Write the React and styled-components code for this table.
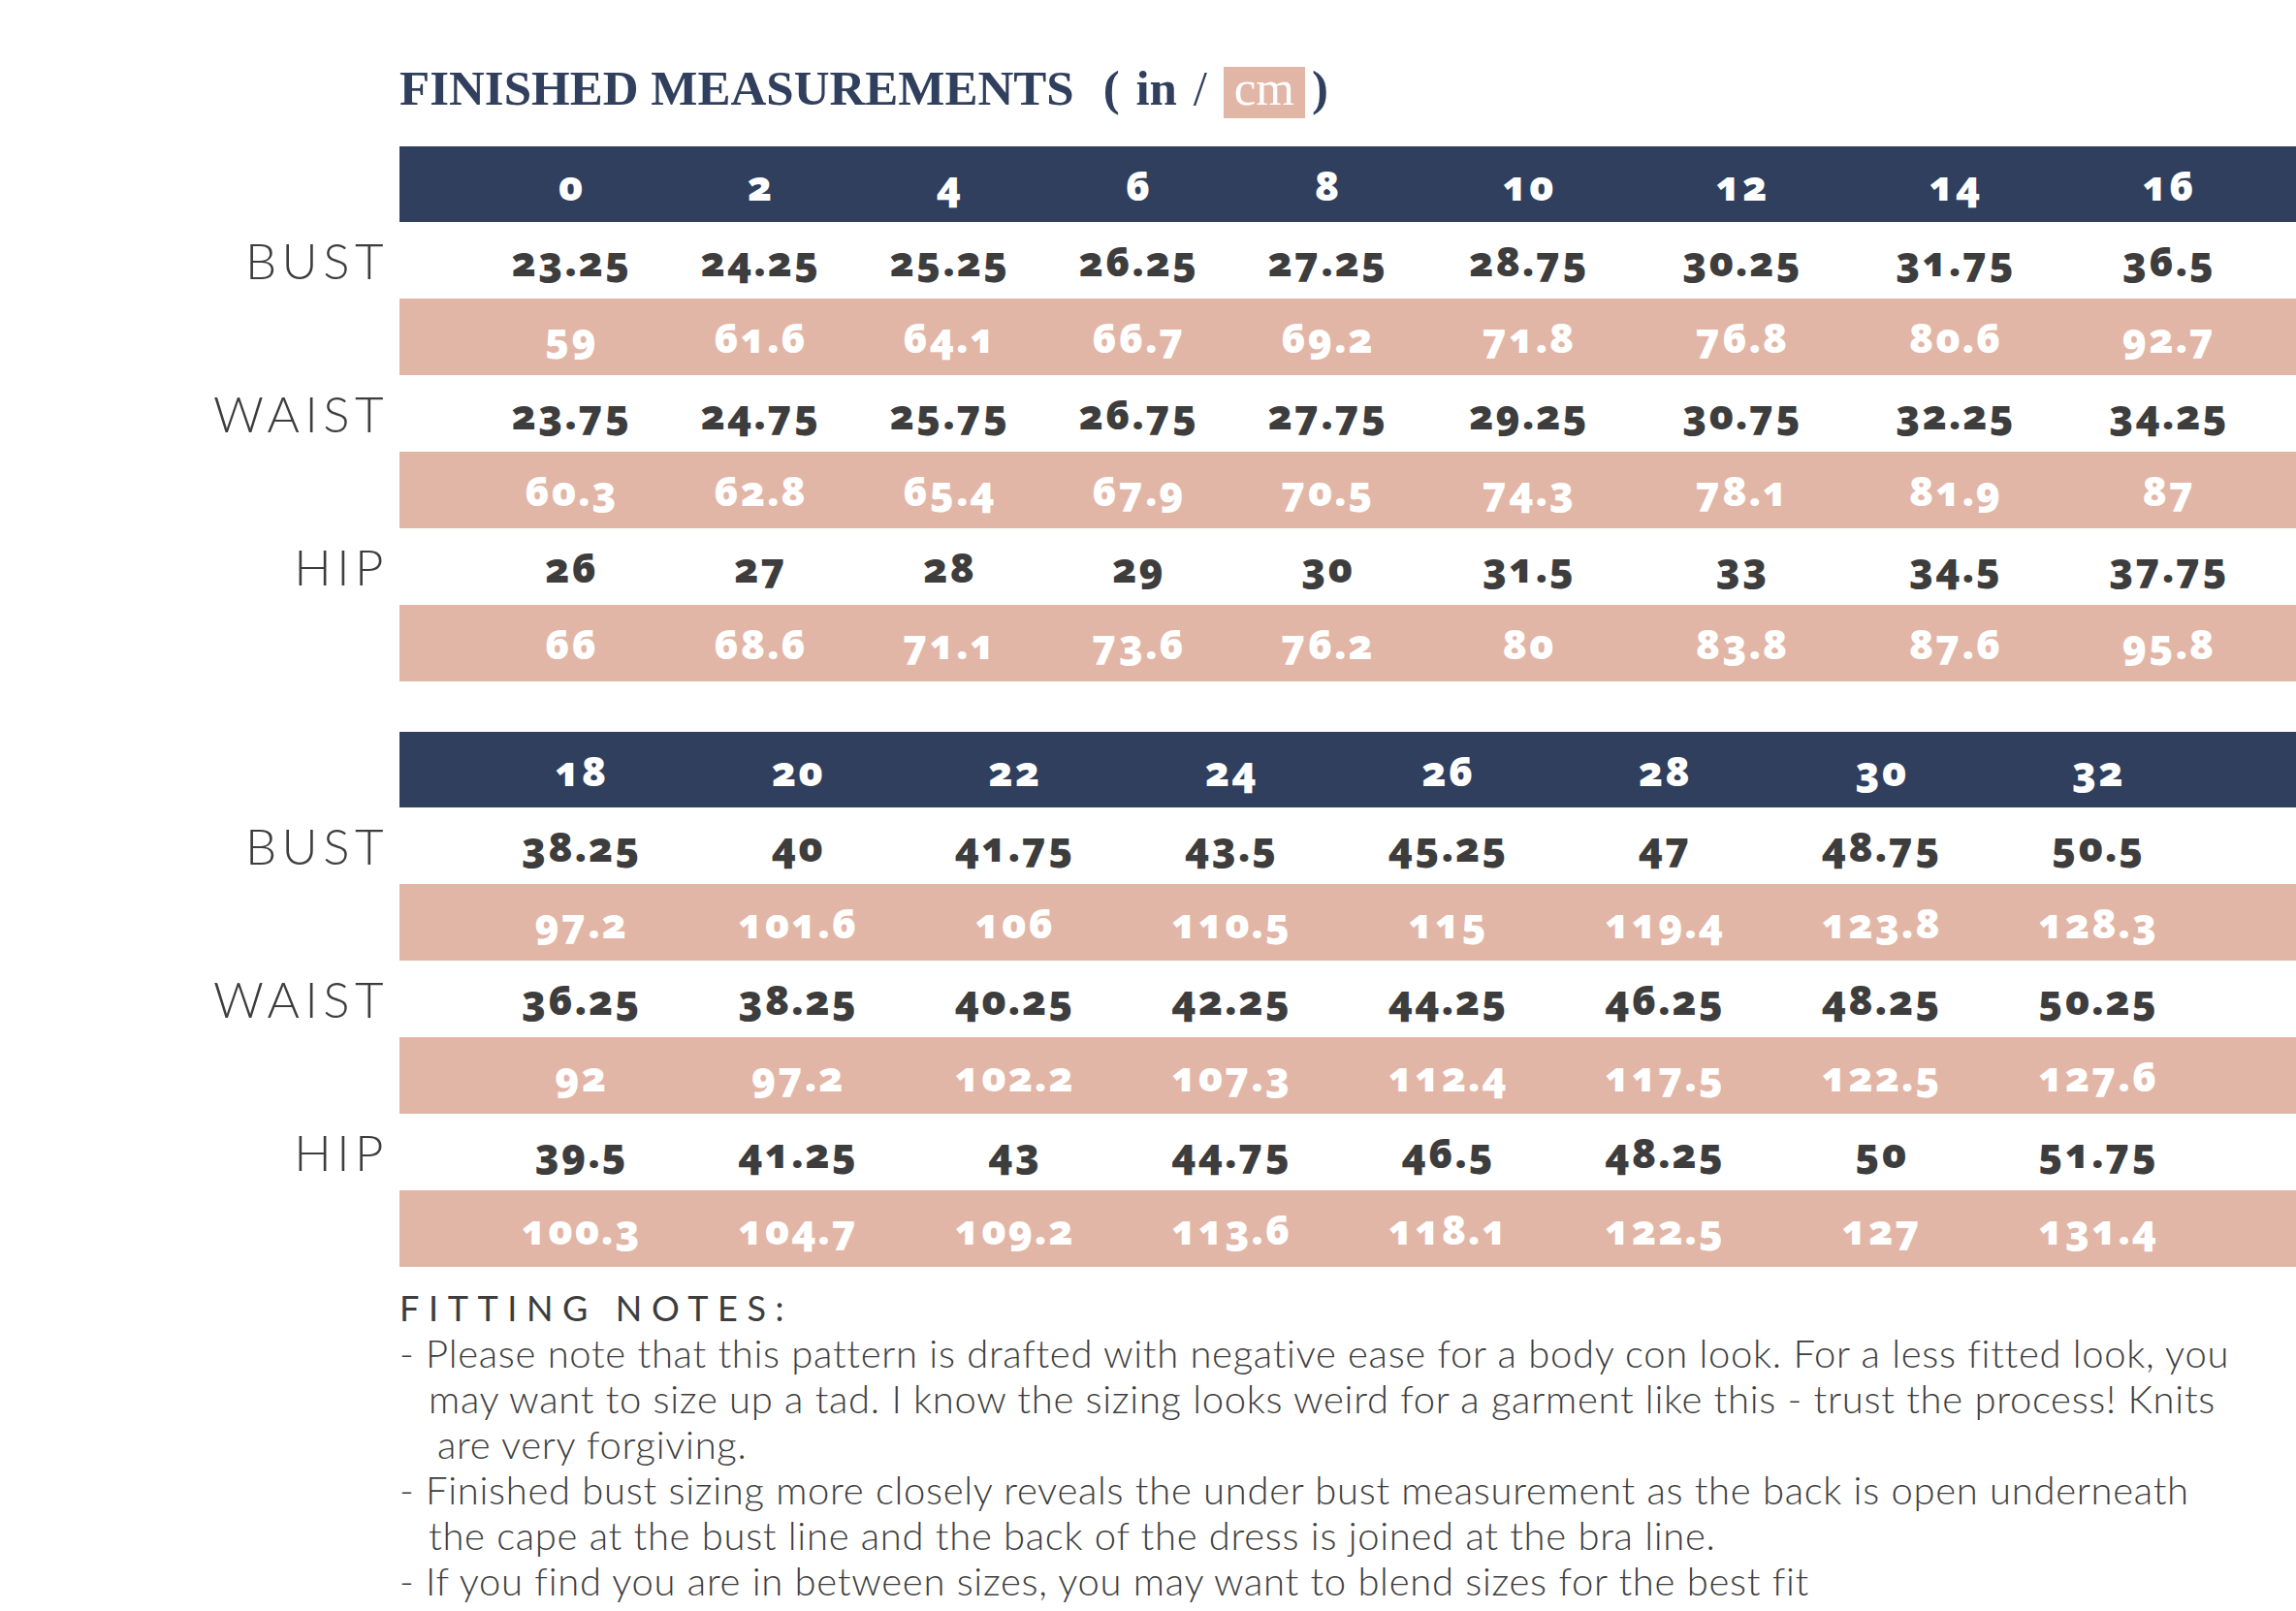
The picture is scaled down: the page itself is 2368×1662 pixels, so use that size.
import styled, { createGlobalStyle } from "styled-components";

const GlobalStyle = createGlobalStyle`
  html, body {
    margin: 0;
    padding: 0;
    background: #ffffff;
  }
`;

const NAVY = "#2f3f5d";
const PINK = "#e2b6a6";
const INK = "#3d3d3d";

const Page = styled.div`
  width: 2368px;
  padding-top: 61px;
  padding-bottom: 20px;
  box-sizing: border-box;
`;

const Title = styled.h1`
  margin: 0 0 29px 412px;
  font-family: "Liberation Serif", "Times New Roman", serif;
  font-weight: 700;
  font-size: 51px;
  line-height: 60px;
  color: ${NAVY};
  white-space: nowrap;
`;

const Units = styled.span`
  margin-left: 30px;
  word-spacing: 4px;
`;

const Slash = styled.span`
  font-weight: 400;
`;

const Cm = styled.span`
  display: inline-block;
  background: ${PINK};
  color: #ffffff;
  font-weight: 400;
  line-height: 44px;
  padding: 0 11px 9px;
  margin-right: 7px;
`;

const Table = styled.div`
  display: grid;
  grid-template-columns: 412px 1fr;
  margin-bottom: ${(p) => p.$gap}px;
`;

const Label = styled.div`
  display: flex;
  align-items: center;
  justify-content: flex-end;
  padding-right: 11px;
  font-family: "Lato", "Noto Sans", sans-serif;
  font-weight: 300;
  font-size: 51px;
  letter-spacing: 5.5px;
  color: ${INK};
`;

const Band = styled.div`
  display: grid;
  grid-template-columns: ${(p) => p.$cols};
  padding-left: ${(p) => p.$pad}px;
  align-items: center;
  height: ${(p) => (p.$kind === "head" ? 78 : 79)}px;
  background: ${(p) =>
    p.$kind === "head" ? NAVY : p.$kind === "cm" ? PINK : "#ffffff"};
  color: ${(p) => (p.$kind === "in" ? INK : "#ffffff")};
`;

const Cell = styled.div`
  text-align: center;
  font-family: "Noto Sans", "DejaVu Sans", sans-serif;
  font-weight: 900;
  font-size: 42px;
  letter-spacing: 2px;
  font-variant-numeric: oldstyle-nums;
  font-feature-settings: "onum" 1;
`;

const Notes = styled.div`
  margin-left: 412px;
  font-family: "Lato", "Noto Sans", sans-serif;
  color: ${INK};
  line-height: 47px;
`;

const NotesHead = styled.div`
  font-weight: 400;
  font-size: 36px;
  letter-spacing: 9.6px;
`;

const Line = styled.div`
  font-weight: 300;
  font-size: 40px;
  letter-spacing: 0.7px;
  white-space: nowrap;
  padding-left: ${(p) => p.$indent || 0}px;
`;

const tables = [
  {
    sizes: ["0", "2", "4", "6", "8", "10", "12", "14", "16"],
    cols: "repeat(5, 195px) repeat(4, 220px)",
    pad: 80,
    gap: 52,
    rows: [
      {
        label: "BUST",
        inch: ["23.25", "24.25", "25.25", "26.25", "27.25", "28.75", "30.25", "31.75", "36.5"],
        cm: ["59", "61.6", "64.1", "66.7", "69.2", "71.8", "76.8", "80.6", "92.7"],
      },
      {
        label: "WAIST",
        inch: ["23.75", "24.75", "25.75", "26.75", "27.75", "29.25", "30.75", "32.25", "34.25"],
        cm: ["60.3", "62.8", "65.4", "67.9", "70.5", "74.3", "78.1", "81.9", "87"],
      },
      {
        label: "HIP",
        inch: ["26", "27", "28", "29", "30", "31.5", "33", "34.5", "37.75"],
        cm: ["66", "68.6", "71.1", "73.6", "76.2", "80", "83.8", "87.6", "95.8"],
      },
    ],
  },
  {
    sizes: ["18", "20", "22", "24", "26", "28", "30", "32"],
    cols: "repeat(8, 223.5px)",
    pad: 76,
    gap: 19,
    rows: [
      {
        label: "BUST",
        inch: ["38.25", "40", "41.75", "43.5", "45.25", "47", "48.75", "50.5"],
        cm: ["97.2", "101.6", "106", "110.5", "115", "119.4", "123.8", "128.3"],
      },
      {
        label: "WAIST",
        inch: ["36.25", "38.25", "40.25", "42.25", "44.25", "46.25", "48.25", "50.25"],
        cm: ["92", "97.2", "102.2", "107.3", "112.4", "117.5", "122.5", "127.6"],
      },
      {
        label: "HIP",
        inch: ["39.5", "41.25", "43", "44.75", "46.5", "48.25", "50", "51.75"],
        cm: ["100.3", "104.7", "109.2", "113.6", "118.1", "122.5", "127", "131.4"],
      },
    ],
  },
];

const noteLines = [
  { text: "- Please note that this pattern is drafted with negative ease for a body con look. For a less fitted look, you", indent: 0 },
  { text: "may want to size up a tad. I know the sizing looks weird for a garment like this - trust the process! Knits", indent: 30 },
  { text: "are very forgiving.", indent: 39 },
  { text: "- Finished bust sizing more closely reveals the under bust measurement as the back is open underneath", indent: 0 },
  { text: "the cape at the bust line and the back of the dress is joined at the bra line.", indent: 30 },
  { text: "- If you find you are in between sizes, you may want to blend sizes for the best fit", indent: 0 },
];

function SizeTable({ table }) {
  return (
    <Table $gap={table.gap}>
      <div />
      <Band $kind="head" $cols={table.cols} $pad={table.pad}>
        {table.sizes.map((s) => (
          <Cell key={s}>{s}</Cell>
        ))}
      </Band>
      {table.rows.map((row) => [
        <Label key={row.label + "-l"}>{row.label}</Label>,
        <Band key={row.label + "-in"} $kind="in" $cols={table.cols} $pad={table.pad}>
          {row.inch.map((v, i) => (
            <Cell key={i}>{v}</Cell>
          ))}
        </Band>,
        <div key={row.label + "-e"} />,
        <Band key={row.label + "-cm"} $kind="cm" $cols={table.cols} $pad={table.pad}>
          {row.cm.map((v, i) => (
            <Cell key={i}>{v}</Cell>
          ))}
        </Band>,
      ])}
    </Table>
  );
}

export default function App() {
  return (
    <Page>
      <GlobalStyle />
      <Title>
        FINISHED MEASUREMENTS
        <Units>
          ( in <Slash>/</Slash> <Cm>cm</Cm>)
        </Units>
      </Title>
      {tables.map((t) => (
        <SizeTable key={t.sizes[0]} table={t} />
      ))}
      <Notes>
        <NotesHead>FITTING NOTES:</NotesHead>
        {noteLines.map((l) => (
          <Line key={l.text} $indent={l.indent}>
            {l.text}
          </Line>
        ))}
      </Notes>
    </Page>
  );
}
